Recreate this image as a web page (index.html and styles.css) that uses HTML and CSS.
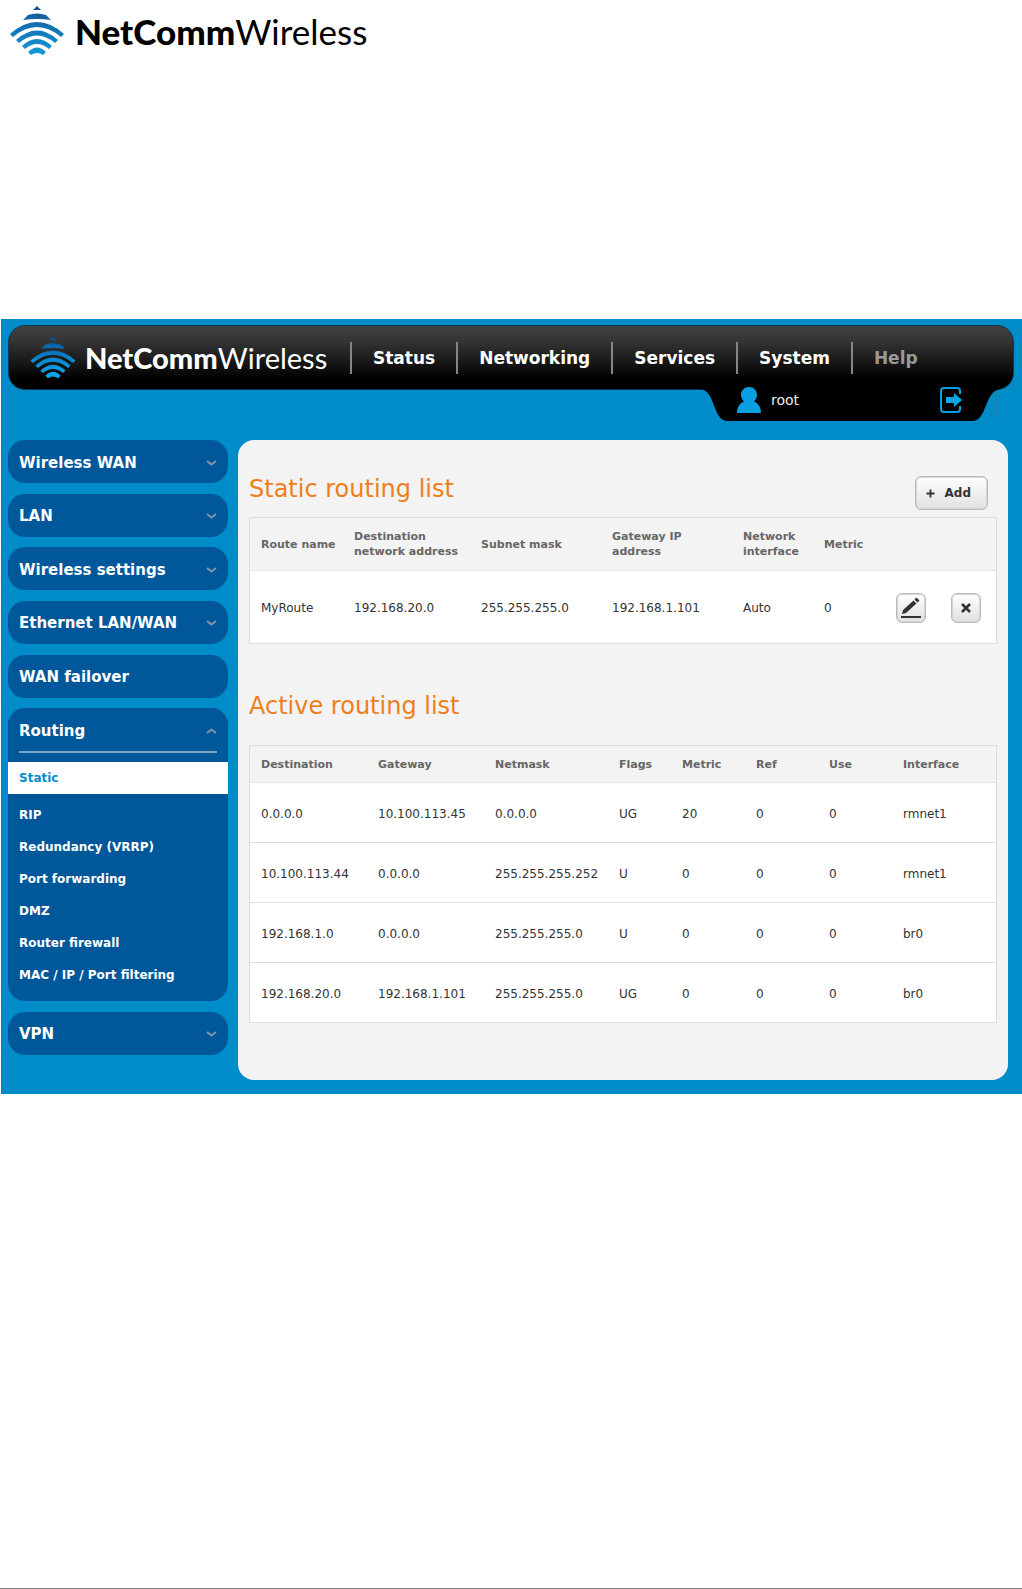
FILE: index.html
```html
<!DOCTYPE html>
<html lang="en">
<head>
  <meta charset="UTF-8">
  <meta name="viewport" content="width=device-width, initial-scale=1.0">
  <title>NetComm Wireless - Static routing</title>
  <link rel="stylesheet" href="styles.css">
</head>
<body>
  <header class="page-header">
    <div class="logo">
      <svg class="logo-icon" viewBox="0 0 54 50" aria-hidden="true">
        <defs>
          <linearGradient id="waveLight" gradientUnits="userSpaceOnUse" x1="0" y1="0" x2="0" y2="50">
            <stop offset="0" stop-color="#14548f"/>
            <stop offset="0.5" stop-color="#1278b8"/>
            <stop offset="1" stop-color="#149bdb"/>
          </linearGradient>
          <linearGradient id="waveDark" gradientUnits="userSpaceOnUse" x1="0" y1="0" x2="0" y2="50">
            <stop offset="0" stop-color="#0a4f95"/>
            <stop offset="0.5" stop-color="#0a84cc"/>
            <stop offset="1" stop-color="#0aabf0"/>
          </linearGradient>
        </defs>
        <g fill="url(#waveLight)">
          <path d="M27 0 L31 4 H23 Z"/>
          <path d="M13 14 L18 9 Q27 6 36 9 L41 14 Q27 12 13 14 Z"/>
          <path d="M0 28 Q27 4 54 28 L51 31 Q27 11 3 31 Z"/>
          <path d="M6 34 Q27 15 48 34 L45 37 Q27 22 9 37 Z"/>
          <path d="M12 40 Q27 26 42 40 L39 43 Q27 33 15 43 Z"/>
          <path d="M18 46 Q27 37 36 46 L33 49 Q27 45 21 49 Z"/>
        </g>
      </svg>
      <span class="logo-text"><b>NetComm</b>Wireless</span>
    </div>
  </header>

  <div class="router">
    <div class="topbar">
      <div class="logo logo-small">
        <svg class="logo-icon" viewBox="0 0 54 50" aria-hidden="true">
          <g fill="url(#waveDark)">
            <path d="M27 0 L31 4 H23 Z"/>
            <path d="M13 14 L18 9 Q27 6 36 9 L41 14 Q27 12 13 14 Z"/>
            <path d="M0 28 Q27 4 54 28 L51 31 Q27 11 3 31 Z"/>
            <path d="M6 34 Q27 15 48 34 L45 37 Q27 22 9 37 Z"/>
            <path d="M12 40 Q27 26 42 40 L39 43 Q27 33 15 43 Z"/>
            <path d="M18 46 Q27 37 36 46 L33 49 Q27 45 21 49 Z"/>
          </g>
        </svg>
        <span class="logo-text"><b>NetComm</b>Wireless</span>
      </div>
      <nav class="topnav">
        <a href="#">Status</a>
        <a href="#">Networking</a>
        <a href="#">Services</a>
        <a href="#">System</a>
        <a href="#" class="muted">Help</a>
      </nav>
    </div>

    <div class="userbar">
      <div class="usertab">
        <svg class="usertab-shape" viewBox="0 0 304 32" preserveAspectRatio="none" aria-hidden="true">
          <path d="M0 0 C16 1 12 32 28 32 H272 C288 32 284 1 301 0 Z"/>
        </svg>
        <svg class="user-icon" viewBox="0 0 24 26" aria-hidden="true">
          <path d="M12 0 C16.500 0 20 3.500 20 8 C20 11 18.500 13 17 14.500 C21 16 24 20 24 26 H0 C0 20 3 16 7 14.500 C5.500 13 4 11 4 8 C4 3.500 7.500 0 12 0 Z"/>
        </svg>
        <span class="username">root</span>
        <button type="button" class="logout" aria-label="Log out">
          <svg viewBox="0 0 22 26" aria-hidden="true">
            <path d="M20 7 V4 Q20 1 17 1 H4 Q1 1 1 4 V22 Q1 25 4 25 H17 Q20 25 20 22 V19" fill="none" stroke="#0a9fe0" stroke-width="2"/>
            <path d="M6 10 H14 V6 L22 13 L14 20 V16 H6 Z" fill="#0aa5ea"/>
          </svg>
        </button>
      </div>
    </div>

    <div class="layout">
      <aside class="sidebar">
        <a href="#" class="menu-item">Wireless WAN <svg class="arrow" viewBox="0 0 11 6"><path d="M1 1 L5.500 4.500 L10 1"/></svg></a>
        <a href="#" class="menu-item">LAN <svg class="arrow" viewBox="0 0 11 6"><path d="M1 1 L5.500 4.500 L10 1"/></svg></a>
        <a href="#" class="menu-item">Wireless settings <svg class="arrow" viewBox="0 0 11 6"><path d="M1 1 L5.500 4.500 L10 1"/></svg></a>
        <a href="#" class="menu-item">Ethernet LAN/WAN <svg class="arrow" viewBox="0 0 11 6"><path d="M1 1 L5.500 4.500 L10 1"/></svg></a>
        <a href="#" class="menu-item">WAN failover</a>
        <div class="menu-group">
          <a href="#" class="menu-item">Routing <svg class="arrow" viewBox="0 0 11 6"><path d="M1 5 L5.500 1.500 L10 5"/></svg></a>
          <ul class="submenu">
            <li class="active"><a href="#">Static</a></li>
            <li><a href="#">RIP</a></li>
            <li><a href="#">Redundancy (VRRP)</a></li>
            <li><a href="#">Port forwarding</a></li>
            <li><a href="#">DMZ</a></li>
            <li><a href="#">Router firewall</a></li>
            <li><a href="#">MAC / IP / Port filtering</a></li>
          </ul>
        </div>
        <a href="#" class="menu-item">VPN <svg class="arrow" viewBox="0 0 11 6"><path d="M1 1 L5.500 4.500 L10 1"/></svg></a>
      </aside>

      <main class="content">
        <section class="static-routes">
          <div class="section-head">
            <h2>Static routing list</h2>
            <button type="button" class="btn btn-add">
              <svg viewBox="0 0 10 10" aria-hidden="true"><path d="M5 0.500 V9.500 M0.500 5 H9.500"/></svg>
              Add
            </button>
          </div>
          <table>
            <colgroup>
              <col class="w-93"><col class="w-127"><col class="w-131"><col class="w-131">
              <col class="w-81"><col class="w-72"><col class="w-55"><col class="w-56">
            </colgroup>
            <thead>
              <tr>
                <th>Route name</th>
                <th>Destination<br>network address</th>
                <th>Subnet mask</th>
                <th>Gateway IP<br>address</th>
                <th>Network<br>interface</th>
                <th>Metric</th>
                <th></th>
                <th></th>
              </tr>
            </thead>
            <tbody>
              <tr>
                <td>MyRoute</td>
                <td>192.168.20.0</td>
                <td>255.255.255.0</td>
                <td>192.168.1.101</td>
                <td>Auto</td>
                <td>0</td>
                <td>
                  <button type="button" class="btn btn-icon" aria-label="Edit">
                    <svg viewBox="0 0 20 22" aria-hidden="true">
                      <path d="M1 17 L2 13 L12.500 3.500 L15.500 6.500 L5 16 Z M13.500 2.500 L15.500 0.500 L18.500 3.500 L16.500 5.500 Z M0 19 H20 V21 H0 Z"/>
                    </svg>
                  </button>
                </td>
                <td>
                  <button type="button" class="btn btn-icon" aria-label="Delete">
                    <svg viewBox="0 0 20 22" aria-hidden="true">
                      <path d="M6 7 L14 15 M14 7 L6 15" stroke="#333" stroke-width="2.500"/>
                    </svg>
                  </button>
                </td>
              </tr>
            </tbody>
          </table>
        </section>

        <section class="active-routes">
          <h2>Active routing list</h2>
          <table>
            <colgroup>
              <col class="w-117"><col class="w-117"><col class="w-124"><col class="w-63">
              <col class="w-74"><col class="w-73"><col class="w-74"><col class="w-104">
            </colgroup>
            <thead>
              <tr>
                <th>Destination</th>
                <th>Gateway</th>
                <th>Netmask</th>
                <th>Flags</th>
                <th>Metric</th>
                <th>Ref</th>
                <th>Use</th>
                <th>Interface</th>
              </tr>
            </thead>
            <tbody>
              <tr><td>0.0.0.0</td><td>10.100.113.45</td><td>0.0.0.0</td><td>UG</td><td>20</td><td>0</td><td>0</td><td>rmnet1</td></tr>
              <tr><td>10.100.113.44</td><td>0.0.0.0</td><td>255.255.255.252</td><td>U</td><td>0</td><td>0</td><td>0</td><td>rmnet1</td></tr>
              <tr><td>192.168.1.0</td><td>0.0.0.0</td><td>255.255.255.0</td><td>U</td><td>0</td><td>0</td><td>0</td><td>br0</td></tr>
              <tr><td>192.168.20.0</td><td>192.168.1.101</td><td>255.255.255.0</td><td>UG</td><td>0</td><td>0</td><td>0</td><td>br0</td></tr>
            </tbody>
          </table>
        </section>
      </main>
    </div>
  </div>

  <footer class="page-footer"></footer>
</body>
</html>
```

FILE: styles.css
```css
* {
  box-sizing: border-box;
}

body {
  display: flex;
  flex-direction: column;
  min-height: 100vh;
  margin: 0;
  background-color: #fff;
  font-family: Verdana, "DejaVu Sans", sans-serif;
  font-size: 12px;
  color: #333;
}

a {
  color: inherit;
  text-decoration: none;
}

h2 {
  margin: 0;
  font-size: 24px;
  line-height: 26px;
  font-weight: normal;
  color: #ee7f1a;
}

/* logo */
.page-header {
  height: 319px;
  padding: 6px 10px;
}

.logo {
  display: flex;
  align-items: center;
  gap: 11px;
  color: #000;
}

.logo-icon {
  width: 54px;
  height: 50px;
}

.logo-text {
  font-family: Lato, sans-serif;
  font-size: 35px;
  line-height: 50px;
}

.logo-text b {
  font-weight: 900;
}

.logo-small {
  width: 320px;
  gap: 9px;
  color: #fff;
}

.logo-small .logo-icon {
  width: 46px;
  height: 42px;
}

.logo-small .logo-text {
  font-size: 29px;
  line-height: 42px;
}

/* top bar */
.router {
  margin-left: 1px;
  padding: 6px 0 14px 7px;
  background-color: #008cc9;
}

.topbar {
  display: flex;
  align-items: center;
  height: 65px;
  margin-right: 8px;
  padding-left: 21px;
  border: 1px solid #0b3a50;
  border-radius: 17px;
  background: linear-gradient(#424242, #333 25%, #000 85%);
}

.topnav {
  display: flex;
}

.topnav a {
  padding: 0 21px;
  border-left: 2px solid #858585;
  font-size: 17px;
  line-height: 32px;
  font-weight: bold;
  color: #fff;
}

.topnav .muted {
  color: #999;
}

.userbar {
  display: flex;
  justify-content: flex-end;
  height: 50px;
  padding-right: 25px;
}

.usertab {
  position: relative;
  display: flex;
  align-items: center;
  width: 297px;
  height: 31px;
  padding: 0 34px 11px 37px;
  border-right: 1px solid #1a84b5;
}

.usertab-shape {
  position: absolute;
  top: -1px;
  left: 0;
  width: 304px;
  height: 32px;
}

.user-icon {
  position: relative;
  width: 24px;
  height: 26px;
  fill: #0a9fe0;
}

.username {
  position: relative;
  margin-left: 10px;
  font-size: 14px;
  color: #eee;
}

.logout {
  position: relative;
  width: 22px;
  height: 26px;
  margin-left: auto;
  padding: 0;
  border: none;
  background: none;
  cursor: pointer;
}

.logout svg {
  display: block;
}

/* side menu */
.layout {
  display: flex;
  gap: 10px;
  padding-right: 14px;
}

.sidebar {
  display: flex;
  flex-direction: column;
  flex-shrink: 0;
  justify-content: space-between;
  width: 220px;
  padding-bottom: 25px;
}

.menu-item {
  display: flex;
  align-items: center;
  justify-content: space-between;
  height: 43px;
  padding: 2px 11px 0;
  border-radius: 17px;
  background-color: #00589b;
  font-size: 15px;
  font-weight: bold;
  color: #fff;
}

.arrow {
  width: 11px;
  height: 6px;
  fill: none;
  stroke: #7f96ab;
  stroke-width: 2;
}

.menu-group {
  padding-bottom: 10px;
  border-radius: 17px;
  background-color: #00589b;
}

.submenu {
  margin: 0;
  padding: 0;
  list-style: none;
  font-weight: bold;
  color: #fff;
}

.submenu::before {
  content: "";
  display: block;
  height: 2px;
  margin: 0 11px 9px;
  background-color: #7fa5c6;
}

.submenu a {
  display: block;
  padding: 0 11px;
  line-height: 32px;
}

.submenu .active {
  margin-bottom: 5px;
  background-color: #fff;
  color: #008cc9;
}

/* content */
.content {
  flex: 1;
  min-width: 0;
  padding: 36px 11px 57px;
  border-radius: 16px;
  background-color: #f3f3f3;
}

.section-head {
  display: flex;
  justify-content: space-between;
  margin-bottom: 7px;
  padding-right: 9px;
}

.active-routes {
  margin-top: 49px;
}

.active-routes h2 {
  margin-bottom: 26px;
}

.btn {
  border: 1px solid #bbb;
  border-radius: 6px;
  background: linear-gradient(#fff, #e0e0e0);
  box-shadow: inset 0 0 0 1px #d5d5d5;
  cursor: pointer;
}

.btn-add {
  display: flex;
  align-items: center;
  gap: 10px;
  height: 34px;
  padding: 0 16px 0 10px;
  font-family: inherit;
  font-size: 12px;
  font-weight: bold;
  color: #333;
}

.btn-add svg {
  width: 9px;
  height: 9px;
  stroke: #333;
  stroke-width: 2;
}

.btn-icon {
  display: block;
  width: 30px;
  height: 30px;
  padding: 0;
}

.btn-icon svg {
  display: block;
  width: 20px;
  height: 22px;
  margin: 0 auto;
  fill: #333;
}

table {
  width: 100%;
  table-layout: fixed;
  border-collapse: separate;
  border-spacing: 0;
  border: 1px solid #ddd;
  border-bottom-width: 0;
}

th,
td {
  padding: 0 0 0 11px;
  text-align: left;
  white-space: nowrap;
}

th {
  height: 37px;
  border-bottom: 1px solid #e6e6e6;
  font-size: 11px;
  line-height: 15px;
  color: #666;
}

td {
  height: 60px;
  padding-top: 2px;
  border-bottom: 1px solid #e0e0e0;
  background-color: #fff;
}

.static-routes th {
  height: 53px;
}

.static-routes td {
  height: 73px;
}

.w-55 { width: 55px; }
.w-56 { width: 56px; }
.w-63 { width: 63px; }
.w-72 { width: 72px; }
.w-73 { width: 73px; }
.w-74 { width: 74px; }
.w-81 { width: 81px; }
.w-93 { width: 93px; }
.w-104 { width: 104px; }
.w-117 { width: 117px; }
.w-124 { width: 124px; }
.w-127 { width: 127px; }
.w-131 { width: 131px; }

.page-footer {
  margin-top: auto;
  border-bottom: 1px solid #808080;
}
```
